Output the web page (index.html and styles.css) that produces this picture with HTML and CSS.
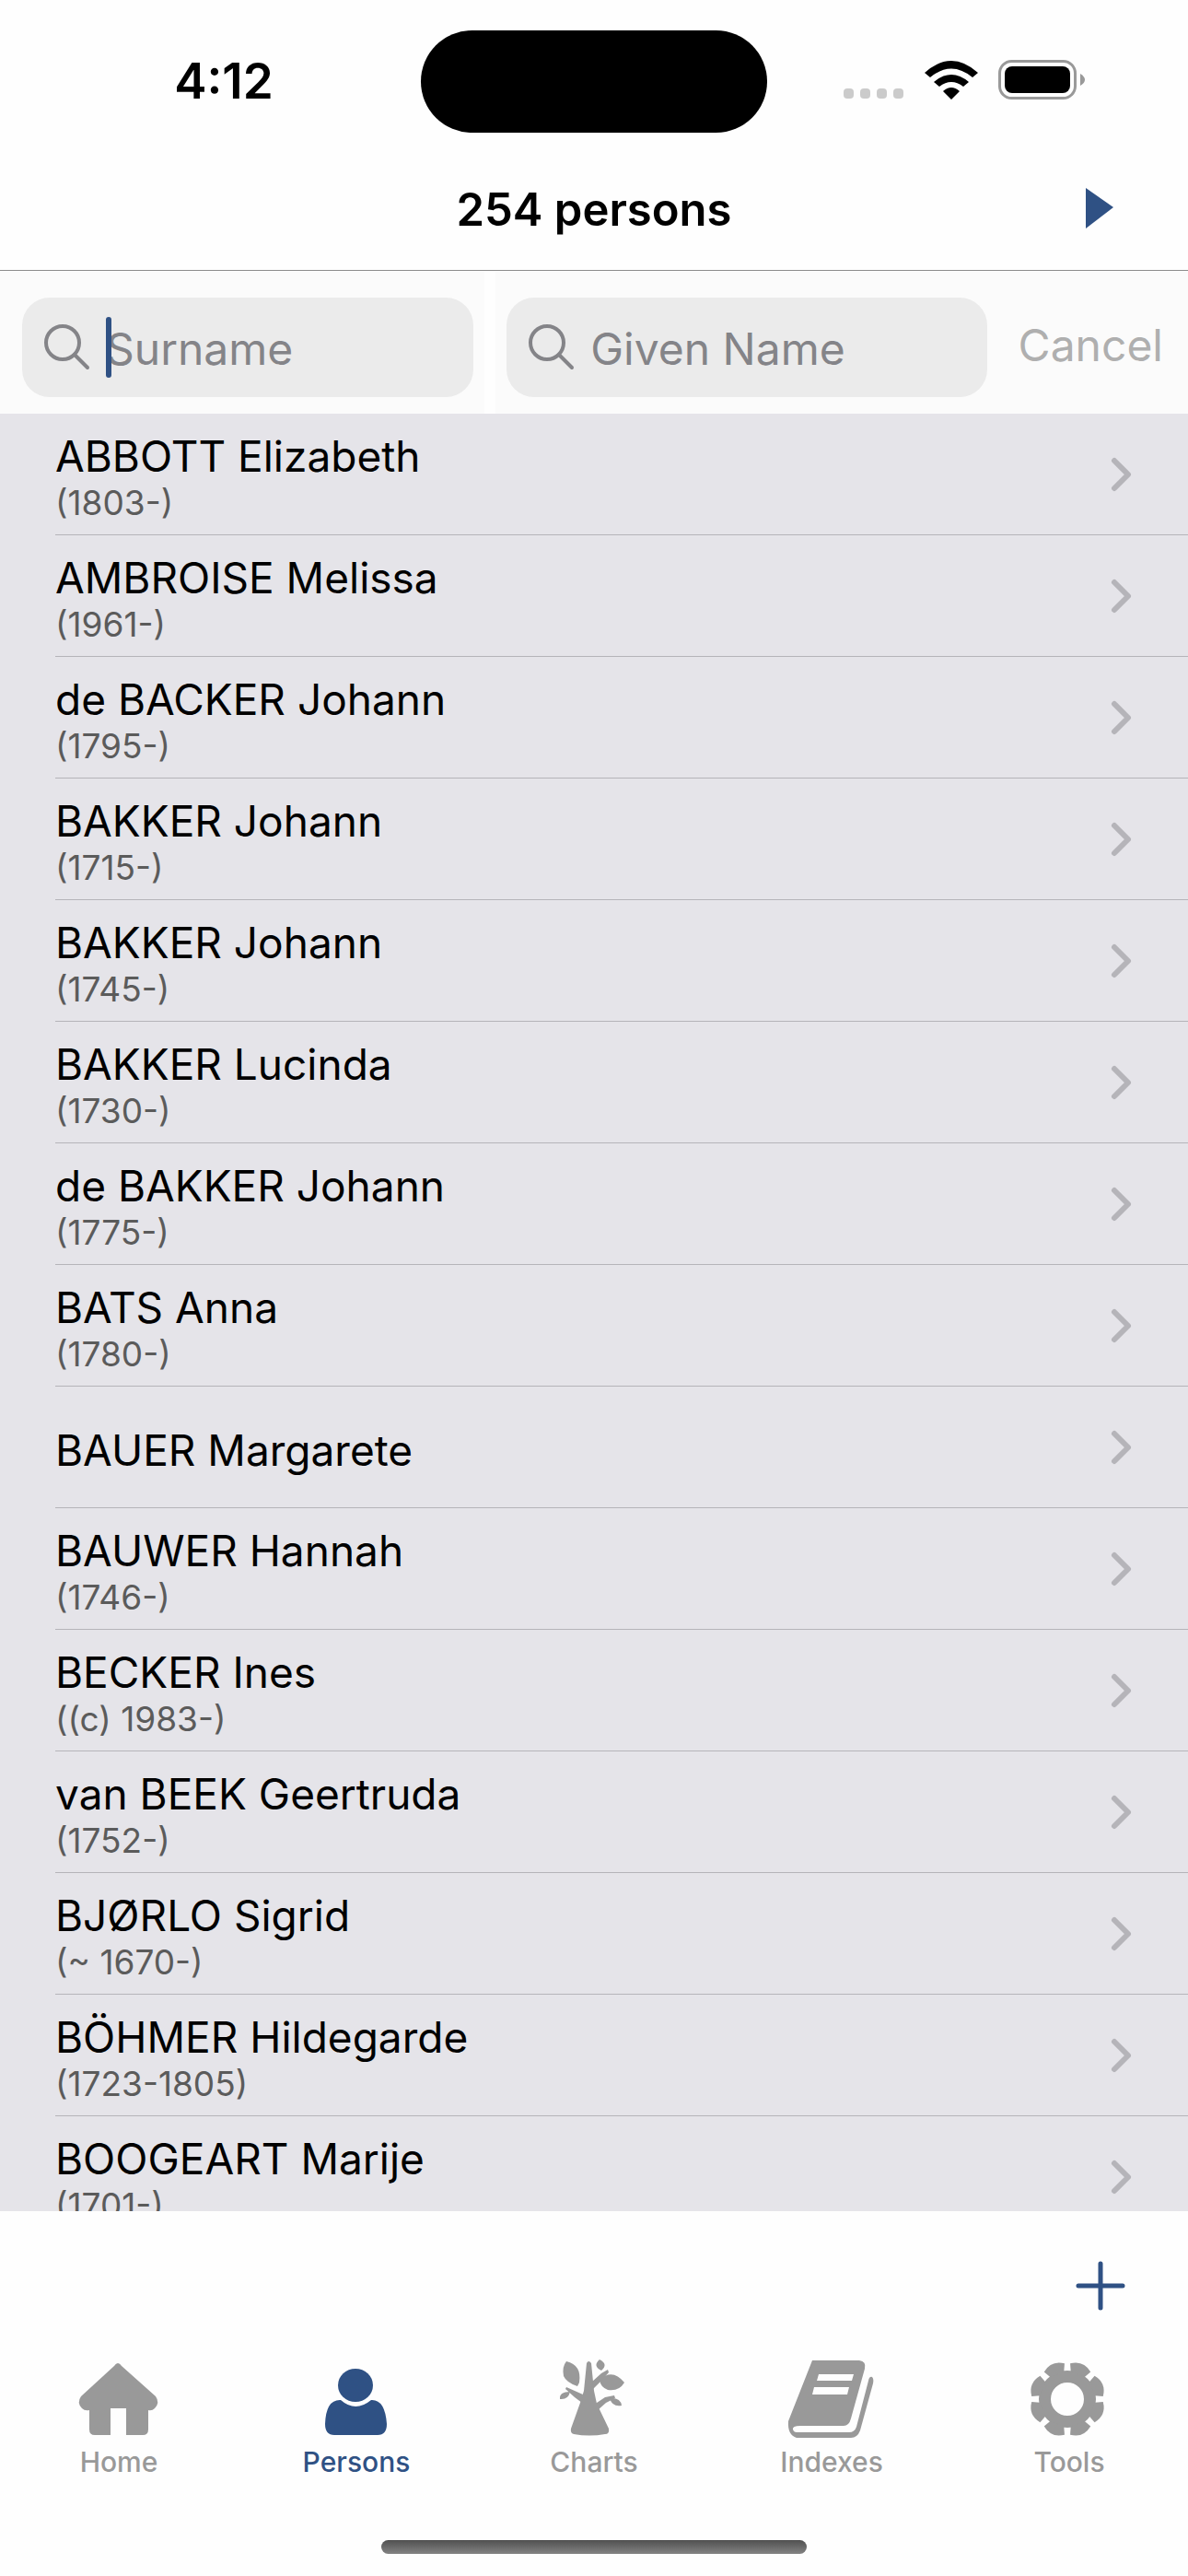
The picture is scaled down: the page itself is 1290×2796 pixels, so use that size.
FILE: index.html
```html
<!DOCTYPE html>
<html lang="en">
<head>
    <meta charset="UTF-8">
    <meta name="viewport" content="width=device-width, initial-scale=1.0">
    <title>Persons</title>
    <link rel="stylesheet" href="styles.css">
</head>
<body>

    <div class="status-bar">
        <div class="time">4:12</div>
        <div class="island"></div>
        <div class="status-icons">
            <svg width="66" height="12" viewBox="0 0 66 12" fill="#cbcbcb">
                <rect x="0" y="0" width="11" height="11" rx="4"/>
                <rect x="18" y="0" width="11" height="11" rx="4"/>
                <rect x="36" y="0" width="11" height="11" rx="4"/>
                <rect x="54" y="0" width="11" height="11" rx="4"/>
            </svg>
            <svg class="wifi" width="58" height="42" viewBox="0 0 58 42">
                <path d="M0 13 Q29 -13 58 13 L52 18 Q29 -1 6 18 Z M10 23 Q29 7 48 23 L42 28 Q29 18 16 28 Z M20 33 Q29 25 38 33 L29 42 Z"/>
            </svg>
            <svg width="96" height="43" viewBox="0 0 96 43">
                <rect x="1.5" y="1.5" width="82" height="40" rx="13" fill="none" stroke="#999" stroke-width="3"/>
                <rect x="7" y="7" width="71" height="29" rx="8"/>
                <path d="M89 15 Q94 18 94 21.5 Q94 25 89 28 Z" fill="#999"/>
            </svg>
        </div>
    </div>

    <header class="title-bar">
        <h1>254 persons</h1>
        <button class="play" aria-label="Next">
            <svg width="32" height="44" viewBox="0 0 32 44"><path d="M1 0 L31 21 L1 44 Z"/></svg>
        </button>
    </header>

    <form class="search">
        <div class="search-part">
            <label class="field">
                <svg width="50" height="50" viewBox="0 0 50 50"><circle cx="20" cy="20" r="18"/><path d="M33 33 L47 47"/></svg>
                <input type="text" aria-label="Surname" placeholder="Surname">
                <span class="caret"></span>
            </label>
        </div>
        <div class="search-part wide">
            <label class="field">
                <svg width="50" height="50" viewBox="0 0 50 50"><circle cx="20" cy="20" r="18"/><path d="M33 33 L47 47"/></svg>
                <input type="text" aria-label="Given Name" placeholder="Given Name">
            </label>
            <button type="button" class="cancel">Cancel</button>
        </div>
    </form>

    <main class="list" id="personList"></main>

    <div class="toolbar">
        <button class="add" aria-label="Add person">
            <svg width="54" height="54" viewBox="0 0 54 54"><path d="M27 3 V51 M3 27 H51"/></svg>
        </button>
    </div>

    <nav class="tabs">
        <a href="#">
            <svg width="88" height="88" viewBox="0 0 88 88">
                <path d="M43 3 Q45 3 47 6 L84 39 Q89 46 83 52 Q80 55 76 54 V75 Q76 81 70 81 H52 V52 H35 V81 H18 Q12 81 12 75 V54 Q7 55 4 52 Q-2 46 3 39 L39 6 Q41 3 43 3 Z"/>
            </svg>
            Home
        </a>
        <a href="#" class="active">
            <svg width="88" height="88" viewBox="0 0 88 88">
                <ellipse cx="43" cy="27" rx="19" ry="18"/>
                <path d="M27 43 Q43 57 60 43 Q75 42 77 69 Q77 81 67 81 H20 Q10 81 10 69 Q11 42 27 43 Z"/>
            </svg>
            Persons
        </a>
        <a href="#">
            <svg width="88" height="88" viewBox="0 0 88 88">
                <path d="M36 3 Q38 -1 41 3 L44 33 L47 47 L60 74 Q61 80 56 80 Q39 83 22 80 Q18 79 19 74 L29 46 L33 33 Z"/>
                <path d="M14 29 L32 37 L31 46 L23 40 L13 31 Z M66 38 L56 40 L44 48 L48 54 L57 46 L67 41 Z M59 10 L52 14 L42 23 L43 31 L53 21 L60 13 Z"/>
                <path d="M14 1 Q31 5 28 24 L26 28 Q14 24 11 17 Q9 7 14 1 Z M50 21 Q64 8 77 24 Q71 34 59 32 Q51 29 50 21 Z M50 -1 Q60 4 52 11 Q42 6 50 -1 Z M18 34 Q16 43 7 42 Q6 34 18 34 Z M61 41 Q64 51 74 49 Q73 40 61 41 Z"/>
            </svg>
            Charts
        </a>
        <a href="#">
            <svg width="96" height="88" viewBox="0 0 96 88">
                <path d="M27 0 H78 Q86 1 84 9 L69 63 Q67 71 61 71 H14 Q5 71 6 75 Q7 78 10 78 H67 Q73 78 75 72 L88 22 Q89 17 92 18 Q94 20 93 25 L79 76 Q76 84 69 84 H10 Q0 81 1 66 Z"/>
                <path d="M34 15 H72 L70 22 H32 Z M29 29 H67 L65 37 H27 Z" class="hole"/>
            </svg>
            Indexes
        </a>
        <a href="#">
            <svg width="88" height="88" viewBox="-42 -42 88 88">
                <circle r="24.5" fill="none" stroke="#999" stroke-width="13"/>
                <g id="gearTeeth"></g>
            </svg>
            Tools
        </a>
    </nav>

    <div class="home-indicator"></div>

    <script src="script.js"></script>
</body>
</html>
```
FILE: styles.css
```css
* {
    box-sizing: border-box;
}
body {
    font-family: Inter, "Liberation Sans", sans-serif;
    margin: 0;
    height: 100vh;
    display: flex;
    flex-direction: column;
    background-color: #fefefe;
    color: #000;
    overflow: hidden;
}
button {
    font-family: inherit;
    padding: 0;
    border: none;
    background: none;
    cursor: pointer;
}
svg {
    display: block;
    flex: none;
    overflow: visible;
}
.status-bar {
    display: grid;
    grid-template-columns: 1fr 376px 1fr;
    align-items: center;
    height: 177px;
    flex: none;
}
.time {
    font-size: 53px;
    font-weight: 600;
    text-align: center;
    padding: 0 0 2px 29px;
}
.island {
    height: 111px;
    border-radius: 56px;
    background-color: #000;
}
.status-icons {
    display: flex;
    align-items: flex-end;
    justify-content: flex-end;
    gap: 22px;
    padding: 0 110px 4px 0;
}
.title-bar {
    position: relative;
    display: flex;
    align-items: center;
    justify-content: center;
    height: 117px;
    padding-bottom: 16px;
    flex: none;
    border-bottom: 1px solid #8c8c8c;
}
.title-bar h1 {
    margin: 0;
    font-size: 49px;
    font-weight: 600;
}
.play {
    position: absolute;
    right: 80px;
    top: 27px;
    fill: #2f5184;
}
.search {
    display: grid;
    grid-template-columns: minmax(0, 7fr) minmax(0, 10fr);
    gap: 12px;
    height: 155px;
    flex: none;
}
.search-part {
    display: flex;
    align-items: center;
    padding: 10px 12px 0 24px;
    background-color: #fbfbfb;
}
.search-part.wide {
    padding: 10px 27px 0 12px;
}
.field {
    position: relative;
    display: flex;
    align-items: center;
    gap: 17px;
    flex: 1;
    min-width: 0;
    height: 108px;
    padding-left: 24px;
    border-radius: 30px;
    background-color: #ebebeb;
}
.field svg {
    fill: none;
    stroke: #848488;
    stroke-width: 4;
    stroke-linecap: round;
}
.field input {
    flex: 1;
    min-width: 0;
    padding: 3px 0 0;
    border: none;
    outline: none;
    background: none;
    font-family: inherit;
    font-size: 48px;
}
.field input::placeholder {
    color: #848488;
}
.caret {
    position: absolute;
    left: 91px;
    top: 21px;
    width: 6px;
    height: 66px;
    border-radius: 3px;
    background-color: #2f5184;
}
.cancel {
    margin-left: 34px;
    padding-bottom: 4px;
    font-size: 48px;
    color: #afafaf;
}
.list {
    flex: 1;
    min-height: 0;
    overflow: hidden;
    padding-left: 60px;
    background-color: #e5e4e9;
}
.person {
    display: flex;
    align-items: center;
    justify-content: space-between;
    height: 132px;
    padding-right: 60px;
    border-bottom: 1px solid #b5b4b9;
    color: #000;
    text-decoration: none;
}
.person svg {
    fill: none;
    stroke: #b5b4b9;
    stroke-width: 6;
    stroke-linecap: round;
    stroke-linejoin: round;
}
.person-text {
    padding-top: 6px;
}
.name {
    font-size: 46px;
    line-height: 56px;
}
.dates {
    font-size: 37px;
    line-height: 45px;
    color: #5b5b5b;
}
.toolbar {
    display: flex;
    align-items: center;
    justify-content: flex-end;
    height: 162px;
    padding-right: 68px;
    flex: none;
}
.add svg {
    fill: none;
    stroke: #2f5184;
    stroke-width: 5;
    stroke-linecap: round;
}
.tabs {
    display: grid;
    grid-template-columns: repeat(5, 1fr);
    height: 195px;
    flex: none;
}
.tabs a {
    display: flex;
    flex-direction: column;
    align-items: center;
    gap: 4px;
    font-size: 30px;
    line-height: 36px;
    font-weight: 500;
    color: #999;
    text-decoration: none;
}
.tabs svg {
    fill: #999;
}
.tabs .active {
    color: #2f5184;
}
.tabs .active svg {
    fill: #2f5184;
}
.tabs .hole {
    fill: #fefefe;
}
.home-indicator {
    width: 462px;
    height: 15px;
    margin: 0 auto 24px;
    flex: none;
    border-radius: 8px;
    background: linear-gradient(#505050, #838383);
}
```
FILE: script.js
```js
const persons = [
    { name: "ABBOTT Elizabeth", dates: "(1803-)" },
    { name: "AMBROISE Melissa", dates: "(1961-)" },
    { name: "de BACKER Johann", dates: "(1795-)" },
    { name: "BAKKER Johann", dates: "(1715-)" },
    { name: "BAKKER Johann", dates: "(1745-)" },
    { name: "BAKKER Lucinda", dates: "(1730-)" },
    { name: "de BAKKER Johann", dates: "(1775-)" },
    { name: "BATS Anna", dates: "(1780-)" },
    { name: "BAUER Margarete", dates: "" },
    { name: "BAUWER Hannah", dates: "(1746-)" },
    { name: "BECKER Ines", dates: "((c) 1983-)" },
    { name: "van BEEK Geertruda", dates: "(1752-)" },
    { name: "BJØRLO Sigrid", dates: "(~ 1670-)" },
    { name: "BÖHMER Hildegarde", dates: "(1723-1805)" },
    { name: "BOOGEART Marije", dates: "(1701-)" }
];

// Rows of the list
document.getElementById("personList").innerHTML = persons.map(p => `
    <a class="person" href="#">
        <div class="person-text">
            <div class="name">${p.name}</div>
            ${p.dates ? `<div class="dates">${p.dates}</div>` : ""}
        </div>
        <svg width="24" height="38" viewBox="0 0 24 38"><path d="M4 4 L19 19 L4 34"/></svg>
    </a>`).join("");

// Eight teeth around the gear, between the notches
let teeth = "";
for (let i = 0; i < 8; i++) {
    teeth += `<path transform="rotate(${i * 45 + 22.5})" d="M-8 -29 L-12 -37 Q0 -46 12 -37 L8 -29 Z"/>`;
}
document.getElementById("gearTeeth").innerHTML = teeth;
```
